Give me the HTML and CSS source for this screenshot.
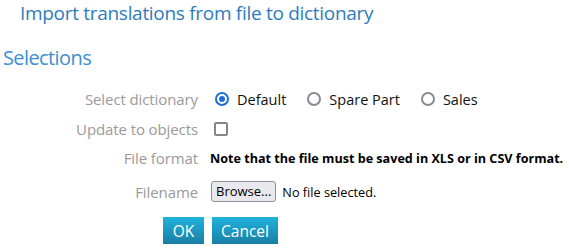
FILE: index.html
```html
<!DOCTYPE html>
<html>
<head>
<meta charset="utf-8">
<link rel="stylesheet" href="styles.css">
</head>
<body>
<h1 class="title">Import translations from file to dictionary</h1>
<h2 class="section">Selections</h2>
<div class="form">
  <div class="label r1">Select dictionary</div>
  <div class="field r1 radios">
    <label class="opt"><span class="radio checked"></span>Default</label>
    <label class="opt"><span class="radio"></span>Spare Part</label>
    <label class="opt"><span class="radio"></span>Sales</label>
  </div>
  <div class="label r2">Update to objects</div>
  <div class="field r2"><span class="check"></span></div>
  <div class="label r3">File format</div>
  <div class="field r3 note">Note that the file must be saved in XLS or in CSV format.</div>
  <div class="label r4">Filename</div>
  <div class="field r4 file"><span class="browse">Browse...</span><span class="nofile">No file selected.</span></div>
  <div class="label r5"></div>
  <div class="field r5 actions"><span class="btn ok">OK</span><span class="btn">Cancel</span></div>
</div>
</body>
</html>
```
FILE: styles.css
```css
html, body { margin: 0; padding: 0; background: #fff; }
body { font-family: "Open Sans", "Noto Sans", sans-serif; color: #000; }
.title { margin: 0; padding: 0 0 0 20px; font-size: 19px; letter-spacing: -0.3px; font-weight: 400; color: #2f7bbd; line-height: 26px; }
.section { margin: 19px 0 0 3px; font-size: 20px; letter-spacing: -0.6px; font-weight: 400; color: #3c8fd0; line-height: 26px; }
.form { display: grid; grid-template-columns: 198px 1fr; column-gap: 12px; margin-top: 13px; }
.label { font-size: 15px; color: #9a9a9a; display: flex; align-items: center; justify-content: flex-end; letter-spacing: -0.1px; }
.field { display: flex; align-items: center; font-size: 14px; }
.r1 { height: 30px; }
.r2 { height: 29px; }
.r3 { height: 30px; }
.r4 { height: 37px; }
.r5 { height: 34px; align-items: flex-end; }
.radios { gap: 21px; padding-left: 5px; }
.opt { display: flex; align-items: center; gap: 8px; font-size: 14.5px; color: #111; }
.radio { width: 10px; height: 10px; border: 2px solid #8a8a96; border-radius: 50%; box-sizing: content-box; position: relative; }
.radio.checked { border-color: #1f6fd6; }
.radio.checked::after { content: ""; position: absolute; left: 2px; top: 2px; width: 6px; height: 6px; border-radius: 50%; background: #1f6fd6; }
.check { width: 10px; height: 10px; border: 2px solid #85858f; border-radius: 2px; margin-left: 4px; }
.note { font-weight: 700; font-size: 12.6px; color: #000; }
.file { gap: 6px; padding-left: 1px; }
.browse { border: 1px solid #8f8f9d; border-radius: 3px; background: #e9e9ed; padding: 1px 4px; font-size: 13px; line-height: 17px; }
.nofile { font-size: 12.7px; }
.actions { gap: 8px; margin-left: -47px; }
.btn { background: linear-gradient(#1fb3dd, #1a7ea3); color: #fff; font-size: 15.5px; height: 27px; display: flex; align-items: center; padding: 0 9px; }
.btn.ok { width: 25px; padding: 0 8px; justify-content: center; }
```
